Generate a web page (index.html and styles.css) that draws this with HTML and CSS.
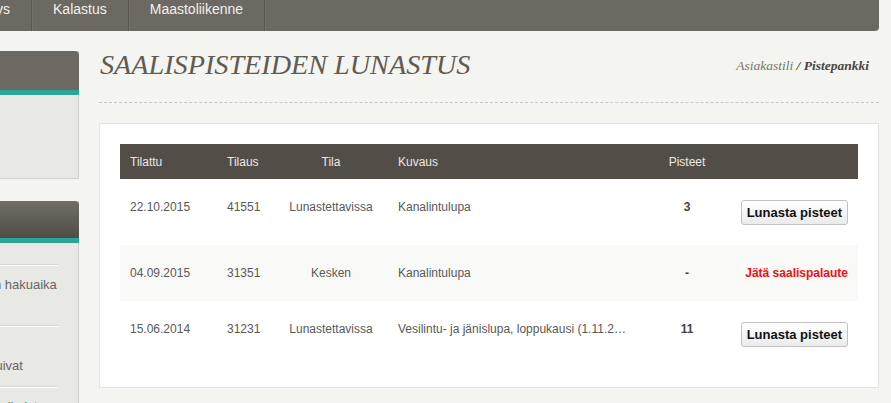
FILE: index.html
```html
<!DOCTYPE html>
<html lang="fi">
<head>
<meta charset="utf-8">
<title>Saalispisteiden lunastus</title>
<link rel="stylesheet" href="styles.css">
</head>
<body>
<div class="page">
  <nav class="topnav">
    <ul class="nav-list">
      <li class="nav-item nav-home"><a href="#" aria-label="Etusivu"><svg width="24" height="18" viewBox="0 0 24 18"><path d="M4 9 L12 2 L20 9 M6 8 V16 H18 V8" fill="none" stroke="#f2f0ea" stroke-width="2"/></svg></a></li>
      <li class="nav-item"><a href="#">Metsästys</a></li>
      <li class="nav-item"><a href="#">Kalastus</a></li>
      <li class="nav-item"><a href="#">Maastoliikenne</a></li>
    </ul>
  </nav>
  <div class="layout">
    <aside class="sidebar">
      <section class="side-box">
        <h2 class="side-head">Asiakastili</h2>
        <ul class="side-links">
          <li><a href="#">Omat tiedot</a></li>
          <li><a href="#">Pistepankki</a></li>
          <li><a href="#">Tilaukset</a></li>
        </ul>
      </section>
      <section class="side-box">
        <h2 class="side-head side-head-dark">Ajankohtaista</h2>
        <ul class="side-news">
          <li><a href="#">Hirvenmetsästysluvan hakuaika on alkanut</a></li>
          <li><a href="#">Tiedote 1.12.2015: Lupakäytännöt muuttuivat</a></li>
          <li><a href="#">Uudet luvat ja kiintiöt julkaistu</a></li>
        </ul>
      </section>
    </aside>
    <main class="main">
      <header class="page-head">
        <h1 class="page-title">SAALISPISTEIDEN LUNASTUS</h1>
        <div class="crumbs"><a href="#" class="crumb">Asiakastili</a> <strong class="crumb-current">/ Pistepankki</strong></div>
      </header>
      <section class="card">
        <table class="points">
          <colgroup>
            <col class="c-date"><col class="c-order"><col class="c-state"><col class="c-desc"><col class="c-points"><col class="c-action">
          </colgroup>
          <thead>
            <tr>
              <th>Tilattu</th>
              <th>Tilaus</th>
              <th class="center">Tila</th>
              <th class="desc">Kuvaus</th>
              <th class="center">Pisteet</th>
              <th></th>
            </tr>
          </thead>
          <tbody>
            <tr>
              <td>22.10.2015</td>
              <td>41551</td>
              <td class="center">Lunastettavissa</td>
              <td class="desc">Kanalintulupa</td>
              <td class="center num">3</td>
              <td class="action"><button class="btn" type="button">Lunasta pisteet</button></td>
            </tr>
            <tr class="alt">
              <td>04.09.2015</td>
              <td>31351</td>
              <td class="center">Kesken</td>
              <td class="desc">Kanalintulupa</td>
              <td class="center num">-</td>
              <td class="action text"><a href="#" class="feedback">Jätä saalispalaute</a></td>
            </tr>
            <tr>
              <td>15.06.2014</td>
              <td>31231</td>
              <td class="center">Lunastettavissa</td>
              <td class="desc" title="Vesilintu- ja jänislupa, loppukausi (1.11.2014-31.12.2014)">Vesilintu- ja jänislupa, loppukausi (1.11.2…</td>
              <td class="center num">11</td>
              <td class="action"><button class="btn" type="button">Lunasta pisteet</button></td>
            </tr>
          </tbody>
        </table>
      </section>
    </main>
  </div>
</div>
</body>
</html>
```
FILE: styles.css
```css
html, body {
  margin: 0;
  padding: 0;
}
body {
  background: #f4f4f0;
  font-family: "Liberation Sans", Arial, sans-serif;
  color: #555;
  overflow: hidden;
}
a { text-decoration: none; color: inherit; }

.page {
  width: 1020px;
  margin-left: -141px;
}

/* top navigation */
.topnav {
  height: 31px;
  background: #6c6962;
  border-bottom-right-radius: 4px;
}
.nav-list {
  list-style: none;
  margin: 0;
  padding: 0;
  display: flex;
  height: 31px;
}
.nav-item {
  border-right: 1px solid #5a5750;
  box-shadow: 1px 0 0 rgba(255,255,255,0.06);
  height: 31px;
}
.nav-item a {
  display: block;
  padding: 0 21px;
  font-size: 14px;
  line-height: 18px;
  color: #f2f0ea;
}
.nav-home svg { display: block; }

/* layout */
.layout {
  display: flex;
  gap: 20px;
  align-items: flex-start;
}
.sidebar {
  width: 220px;
  flex: none;
  padding-top: 20px;
  display: flex;
  flex-direction: column;
  gap: 22px;
}
.side-box {
  background: #e8e8e4;
  border-right: 1px solid #d2d2ce;
  border-bottom: 1px solid #d2d2ce;
}
.side-head {
  margin: 0 -1px 0 0;
  height: 39px;
  padding-left: 15px;
  background: #6c6962;
  border-top-right-radius: 4px;
  border-bottom: 5px solid #2ba596;
  color: #fff;
  font-size: 14px;
  font-weight: bold;
  line-height: 39px;
}
.side-head-dark {
  height: 37px;
  line-height: 37px;
  background: linear-gradient(#716e67, #4f4b45);
}
.side-links {
  list-style: none;
  margin: 0;
  padding: 12px 0 0 15px;
  height: 71px;
  font-size: 13px;
  line-height: 20px;
  color: #666;
}
.side-news {
  list-style: none;
  margin: 0;
  padding: 21px 20px 0 15px;
  font-size: 13px;
  line-height: 20px;
  color: #666;
}
.side-news li {
  border-top: 1px solid #d6d6d2;
  box-shadow: inset 0 1px 0 #fff;
  padding: 10px 0 10px;
}

/* main column */
.main {
  flex: 1;
  min-width: 0;
}
.page-head {
  display: flex;
  justify-content: space-between;
  align-items: flex-start;
  padding: 17px 10px 20px 1px;
  border-bottom: 1px dashed #c8c8c4;
}
.page-title {
  margin: 0;
  font-family: "Liberation Serif", "Times New Roman", serif;
  font-style: italic;
  font-weight: normal;
  font-size: 28.2px;
  line-height: 34px;
  color: #5f5b55;
}
.crumbs {
  margin-top: 10px;
  font-family: "Liberation Serif", "Times New Roman", serif;
  font-style: italic;
  font-size: 13.5px;
  line-height: 16px;
  color: #78746d;
}
.crumb-current {
  color: #4a4640;
  font-weight: bold;
}

.card {
  margin-top: 20px;
  background: #fff;
  border: 1px solid #e4e4e0;
  padding: 20px;
}
.points {
  width: 100%;
  border-collapse: collapse;
  table-layout: fixed;
  font-size: 12px;
}
.c-date { width: 97px; }
.c-order { width: 62px; }
.c-state { width: 104px; }
.c-desc { width: 257px; }
.c-points { width: 94px; }
.c-action { width: 124px; }

.points th {
  background: #524e47;
  color: #ebe9e4;
  font-weight: normal;
  text-align: left;
  height: 35px;
  padding: 0 10px;
  vertical-align: middle;
}
.points td {
  padding: 20px 10px;
  vertical-align: top;
  line-height: 16px;
  color: #595959;
  white-space: nowrap;
}
.points td.desc {
  overflow: hidden;
  text-overflow: ellipsis;
}
.points .center { text-align: center; }
.points .desc { padding-left: 15px; }
.points .num { font-weight: bold; color: #444; }
.points td.action {
  text-align: right;
  padding: 21px 10px 20px 0;
}
.points td.action.text { padding-top: 20px; }
.points tr.alt td { background: #f9f9f8; }

.btn {
  height: 25px;
  padding: 0 5px;
  font-family: "Liberation Sans", Arial, sans-serif;
  font-size: 13px;
  font-weight: bold;
  color: #111;
  background: linear-gradient(#ffffff, #ebebeb);
  border: 1px solid #c2c2c2;
  border-radius: 3px;
  vertical-align: top;
}
.feedback {
  color: #ef1010;
  font-weight: bold;
}
```
